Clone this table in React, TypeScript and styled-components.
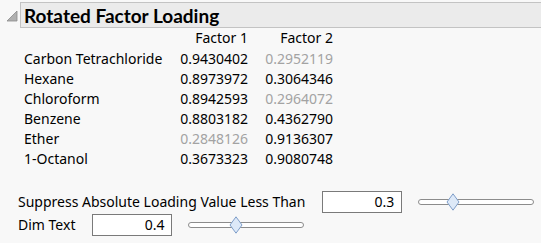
import React from "react";
import styled, { createGlobalStyle } from "styled-components";

const GlobalStyle = createGlobalStyle`
  html, body {
    margin: 0;
    padding: 0;
    background: #f8f8f8;
  }
  body {
    font-family: "Noto Sans", "Open Sans", sans-serif;
    color: #000;
  }
`;

interface FactorRow {
  name: string;
  f1: string;
  f2: string;
  dim1?: boolean;
  dim2?: boolean;
}

const rows: FactorRow[] = [
  { name: "Carbon Tetrachloride", f1: "0.9430402", f2: "0.2952119", dim2: true },
  { name: "Hexane", f1: "0.8973972", f2: "0.3064346" },
  { name: "Chloroform", f1: "0.8942593", f2: "0.2964072", dim2: true },
  { name: "Benzene", f1: "0.8803182", f2: "0.4362790" },
  { name: "Ether", f1: "0.2848126", f2: "0.9136307", dim1: true },
  { name: "1-Octanol", f1: "0.3673323", f2: "0.9080748" },
];

const Page = styled.div`
  width: 541px;
  height: 243px;
  overflow: hidden;
  padding-top: 2px;
  box-sizing: border-box;
`;

const OutlineHeader = styled.div`
  display: flex;
  align-items: center;
  height: 26px;
`;

const Disclosure = styled.svg`
  width: 20px;
  height: 26px;
  flex: none;
`;

const TitleBar = styled.div`
  flex: 1;
  height: 24px;
  display: flex;
  align-items: center;
  padding-left: 3px;
  background: #ebebeb;
  border-top: 1px solid #c3c3c3;
  border-bottom: 1px solid #c3c3c3;
  border-left: 1px solid #c3c3c3;
  font-family: Lato, "Noto Sans", sans-serif;
  font-weight: 700;
  font-size: 19px;
  white-space: nowrap;
`;

const LoadingTable = styled.div`
  display: grid;
  grid-template-columns: 150px 74px 85px;
  grid-auto-rows: 20px;
  margin-top: 1px;
  margin-left: 24px;
  font-size: 14px;
  line-height: 20px;
`;

const HeadCell = styled.div`
  text-align: right;
  line-height: 18px;
  height: 18px;
`;

const NameCell = styled.div`
  white-space: nowrap;
`;

const ValueCell = styled.div<{ dim?: boolean }>`
  text-align: right;
  color: ${(props) => (props.dim ? "#a3a3a3" : "#000")};
`;

const Controls = styled.div`
  display: flex;
  flex-direction: column;
  margin-top: 21px;
  padding-left: 18px;
  font-size: 14px;
`;

const ControlRow = styled.div`
  display: flex;
  align-items: center;
  height: 23px;
`;

const ControlLabel = styled.span`
  white-space: nowrap;
  margin-right: 17px;
`;

const ValueBox = styled.div`
  width: 80px;
  height: 22px;
  box-sizing: border-box;
  border: 1px solid #7a7a7a;
  background: #fff;
  text-align: right;
  padding-right: 7px;
  line-height: 20px;
  margin-right: 16px;
`;

const SliderTrack = styled.div`
  position: relative;
  width: 116px;
  height: 6px;
  box-sizing: border-box;
  border: 1px solid #8c8c8c;
  border-radius: 3px;
  background: #fff;
`;

const SliderThumb = styled.svg<{ pos: number }>`
  position: absolute;
  top: -7px;
  left: ${(props) => props.pos - 7}px;
  width: 14px;
  height: 18px;
`;

function Slider({ pos }: { pos: number }) {
  return (
    <SliderTrack>
      <SliderThumb pos={pos} viewBox="0 0 14 18">
        <path d="M7 0.8 L13 9 L7 17.2 L1 9 Z" fill="#dde9f8" stroke="#7f9ec9" strokeWidth="1" />
      </SliderThumb>
    </SliderTrack>
  );
}

export default function App() {
  return (
    <>
      <GlobalStyle />
      <Page>
        <OutlineHeader>
          <Disclosure viewBox="0 0 20 26">
            <path d="M17 9 L17 19 L7 19 Z" fill="#b0b0b0" stroke="#8c8c8c" strokeWidth="0.8" />
          </Disclosure>
          <TitleBar>Rotated Factor Loading</TitleBar>
        </OutlineHeader>

        <LoadingTable>
          <HeadCell />
          <HeadCell>Factor 1</HeadCell>
          <HeadCell>Factor 2</HeadCell>
          {rows.map((r) => (
            <React.Fragment key={r.name}>
              <NameCell>{r.name}</NameCell>
              <ValueCell dim={r.dim1}>{r.f1}</ValueCell>
              <ValueCell dim={r.dim2}>{r.f2}</ValueCell>
            </React.Fragment>
          ))}
        </LoadingTable>

        <Controls>
          <ControlRow>
            <ControlLabel>Suppress Absolute Loading Value Less Than</ControlLabel>
            <ValueBox>0.3</ValueBox>
            <Slider pos={34} />
          </ControlRow>
          <ControlRow>
            <ControlLabel>Dim Text</ControlLabel>
            <ValueBox>0.4</ValueBox>
            <Slider pos={47} />
          </ControlRow>
        </Controls>
      </Page>
    </>
  );
}
